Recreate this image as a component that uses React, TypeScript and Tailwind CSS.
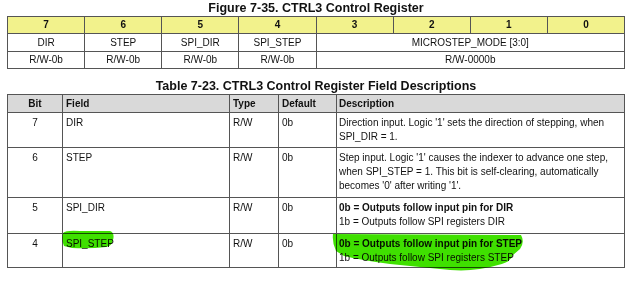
import React from 'react'

const bits = ['7', '6', '5', '4', '3', '2', '1', '0']

const rows = [
	{ bit: '7', field: 'DIR', h: 'h-[35px]', desc: <>Direction input. Logic '1' sets the direction of stepping, when<br />SPI_DIR = 1.</> },
	{ bit: '6', field: 'STEP', h: 'h-[50px]', desc: <>Step input. Logic '1' causes the indexer to advance one step,<br />when SPI_STEP = 1. This bit is self-clearing, automatically<br />becomes '0' after writing '1'.</> },
	{ bit: '5', field: 'SPI_DIR', h: 'h-[36px]', desc: <><b>0b = Outputs follow input pin for DIR</b><br />1b = Outputs follow SPI registers DIR</> },
	{ bit: '4', field: 'SPI_STEP', h: 'h-[34px]', desc: <><b>0b = Outputs follow input pin for STEP</b><br />1b = Outputs follow SPI registers STEP</> },
]

const App = () => {
	return (
		<main className="relative w-[640px] h-[282px] overflow-hidden bg-white text-[#111] font-['Liberation_Sans',Arial,sans-serif]">
			<h1 className="pt-[1px] h-[16px] w-[618px] ml-[7px] text-center text-[12.5px] leading-[15px] font-bold">Figure 7-35. CTRL3 Control Register</h1>
			<table className="ml-[7px] w-[618px] table-fixed border-collapse border border-[#333] text-[10px] leading-[12px] text-center">
				<tbody>
					<tr className="h-[17px] bg-[#f2f28c] font-bold">
						{bits.map((b) => (
							<td key={b} className="border border-[#555] p-0">{b}</td>
						))}
					</tr>
					<tr className="h-[18px]">
						<td className="border border-[#555] p-0">DIR</td>
						<td className="border border-[#555] p-0">STEP</td>
						<td className="border border-[#555] p-0">SPI_DIR</td>
						<td className="border border-[#555] p-0">SPI_STEP</td>
						<td colSpan={4} className="border border-[#555] p-0">MICROSTEP_MODE [3:0]</td>
					</tr>
					<tr className="h-[17px]">
						<td className="border border-[#555] p-0">R/W-0b</td>
						<td className="border border-[#555] p-0">R/W-0b</td>
						<td className="border border-[#555] p-0">R/W-0b</td>
						<td className="border border-[#555] p-0">R/W-0b</td>
						<td colSpan={4} className="border border-[#555] p-0">R/W-0000b</td>
					</tr>
				</tbody>
			</table>
			<h2 className="mt-[10px] h-[15px] w-[618px] ml-[7px] text-center text-[12.5px] leading-[14px] font-bold">Table 7-23. CTRL3 Control Register Field Descriptions</h2>
			<table className="ml-[7px] w-[618px] table-fixed border-collapse border border-[#333] text-[10px] leading-[14px]">
				<colgroup>
					<col className="w-[55px]" />
					<col className="w-[167px]" />
					<col className="w-[49px]" />
					<col className="w-[58px]" />
					<col />
				</colgroup>
				<thead>
					<tr className="h-[18px] bg-[#d9d9d9] font-bold">
						<td className="border border-[#555] p-0 text-center">Bit</td>
						<td className="border border-[#555] py-0 px-[3px]">Field</td>
						<td className="border border-[#555] py-0 px-[3px]">Type</td>
						<td className="border border-[#555] py-0 px-[3px]">Default</td>
						<td className="border border-[#555] py-0 px-[2px]">Description</td>
					</tr>
				</thead>
				<tbody>
					{rows.map((r) => (
						<tr key={r.bit} className={r.h}>
							<td className="border border-[#555] pt-[3px] pb-0 px-0 align-top text-center">{r.bit}</td>
							<td className="border border-[#555] pt-[3px] pb-0 px-[3px] align-top">{r.field}</td>
							<td className="border border-[#555] pt-[3px] pb-0 px-[3px] align-top">R/W</td>
							<td className="border border-[#555] pt-[3px] pb-0 px-[3px] align-top">0b</td>
							<td className="border border-[#555] pt-[3px] pb-0 px-[2px] align-top">{r.desc}</td>
						</tr>
					))}
				</tbody>
			</table>
			{/* marker highlight drawn over the page */}
			<svg className="pointer-events-none absolute left-0 top-0 mix-blend-multiply" width="640" height="282" viewBox="0 0 640 282">
				<path d="M63,233 Q66,230 80,231 L110,231 Q115,233 113,240 Q112,246 106,247 Q90,249 72,248 L64,246 Q61,239 63,233 Z" fill="#3fe000" />
				<path d="M333,234 L521,235 Q525,242 520,249 L513,255 Q511,262 498,265 Q475,272 450,270 Q420,267 390,264 Q360,260 344,256 L336,251 Q332,243 333,234 Z" fill="#3fe000" />
			</svg>
		</main>
	)
}

export default App
